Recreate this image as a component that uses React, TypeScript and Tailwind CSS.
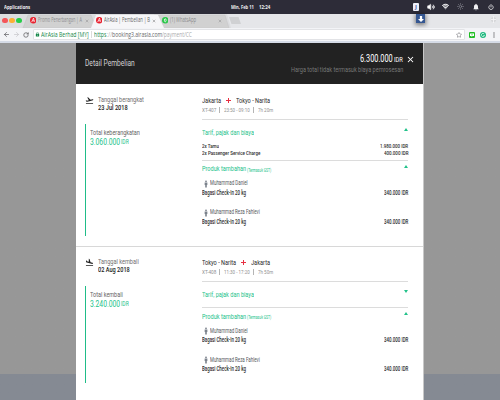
import { useLayoutEffect, useRef, useState } from "react";
import type { ReactNode } from "react";
import { Volume2, Wifi, Sun, Power, ArrowLeft, ArrowRight, RotateCw, Star, X } from "lucide-react";
import { MdFlightTakeoff, MdFlightLand, MdLock, MdNotifications, MdMoreVert } from "react-icons/md";

/* Single line of text condensed or widened to fill the width of its box. */
function Fit({ className, children }: { className: string; children: ReactNode }) {
  const box = useRef<HTMLDivElement>(null);
  const text = useRef<HTMLSpanElement>(null);
  const [scale, setScale] = useState(1);
  useLayoutEffect(() => {
    if (box.current && text.current) {
      setScale(box.current.getBoundingClientRect().width / text.current.offsetWidth);
    }
  }, [children]);
  return (
    <div ref={box} className={`shrink-0 whitespace-nowrap leading-none ${className}`}>
      <span ref={text} className="inline-block origin-left" style={{ transform: `scaleX(${scale})` }}>
        {children}
      </span>
    </div>
  );
}

function AirAsiaIcon() {
  return (
    <svg viewBox="0 0 12 12" className="size-[6.5px] shrink-0">
      <circle cx="6" cy="6" r="6" fill="#e8202e" />
      <path d="M3 9.5 6.5 2l1.6 7M4.4 7h4" fill="none" stroke="#fff" strokeWidth="1.3" />
    </svg>
  );
}

function WhatsAppIcon() {
  return (
    <svg viewBox="0 0 12 12" className="size-[6.5px] shrink-0">
      <circle cx="6" cy="6" r="6" fill="#2bc64a" />
      <ellipse cx="6" cy="6" rx="1.6" ry="2.8" fill="none" stroke="#fff" strokeWidth="1.5" />
    </svg>
  );
}

function TopBar() {
  return (
    <div className="flex h-[14px] items-center bg-[#2d2c38] pb-px text-[6px] font-bold text-[#f0f0f2]">
      <Fit className="ml-1 w-[26px]">Applications</Fit>
      <Fit className="ml-[201px] w-[23px]">Min, Feb 11</Fit>
      <Fit className="ml-[5px] w-[11px]">12:24</Fit>
      <div className="ml-[143px] flex h-[8px] w-[6px] items-center justify-center rounded-[1px] bg-[#eef1fa] text-[6px] leading-none text-[#4c57a0]">J</div>
      <Volume2 className="ml-[8px] size-[8px] shrink-0 fill-white" strokeWidth={2} />
      <Wifi className="ml-[7px] size-[7px] shrink-0" strokeWidth={3.5} />
      <Sun className="ml-[8px] size-[7px] shrink-0 text-[#85858e]" strokeWidth={2.5} />
      <MdNotifications className="ml-[8px] size-[8px] shrink-0" />
      <Power className="ml-[8px] size-[6px] shrink-0" strokeWidth={3} />
    </div>
  );
}

function TabStrip() {
  return (
    <div className="relative flex h-[14px] items-center bg-[#e5e6e9] text-[6.500px] text-[#8c8c8e]">
      <svg viewBox="0 0 245 14" className="absolute inset-0 h-[14px] w-[245px]">
        <path d="M0 0H227L231 14H0z" fill="#dcdddf" />
        <path d="M23 14 28 1H91L96 14z" fill="#d1d1d1" stroke="#c2c2c4" strokeWidth=".5" />
        <path d="M157 14 154 1H225L229 14z" fill="#d1d1d1" stroke="#c5c5c7" strokeWidth=".5" />
        <path d="M91 14 96 1H158L164 14z" fill="#f6f6f8" />
        <path d="M229 3H238.500L241 10H231.500z" fill="#d0d1d3" />
      </svg>
      <div className="relative flex h-full items-center pb-[1px]">
        <div className="ml-[2px] size-[5.500px] rounded-full bg-[#f4565a]" />
        <div className="ml-[1.500px] size-[5.500px] rounded-full bg-[#fbb035]" />
        <div className="ml-[1.500px] size-[5.500px] rounded-full bg-[#27cd49]" />
        <div className="ml-[8px] flex"><AirAsiaIcon /></div>
        <Fit className="ml-[1.500px] w-[44px]">Promo Penerbangan | A</Fit>
        <X className="ml-[3px] size-[4px]" strokeWidth={3} />
        <div className="ml-[7px] flex"><AirAsiaIcon /></div>
        <Fit className="ml-[1.500px] w-[46px] text-[#666]">AirAsia | Pembelian | B</Fit>
        <X className="ml-[2px] size-[4px] text-[#777]" strokeWidth={3} />
        <div className="ml-[6px] flex"><WhatsAppIcon /></div>
        <Fit className="ml-[2px] w-[26px]">(1) WhatsApp</Fit>
        <X className="ml-[22px] size-[4px]" strokeWidth={3} />
      </div>
      <div className="absolute left-[416px] top-0 flex h-[9px] w-[9px] items-center justify-center bg-[#345691] shadow-[0_1px_4px_1px_rgba(0,0,0,0.45)]">
        <svg viewBox="0 0 8 8" className="size-[6px]"><path d="M2.500 0h3v4H8L4 8 0 4h2.500z" fill="#fff" /></svg>
      </div>
      <svg viewBox="0 0 8 8" className="absolute left-[490px] top-[2px] size-[7px]">
        <circle cx="4" cy="4" r="3" fill="#d6d7d9" /><path d="M4 0v8M1 4h6" stroke="#f5f5f7" />
      </svg>
    </div>
  );
}

function Toolbar() {
  return (
    <div className="flex h-[15px] items-center border-b-2 border-[#d5dbe6] bg-[#f3f4f7] text-[#606164]">
      <ArrowLeft className="ml-[3px] size-[7px] shrink-0" strokeWidth={2.5} />
      <ArrowRight className="ml-[3px] size-[7px] shrink-0 text-[#c6c7ca]" strokeWidth={2.5} />
      <RotateCw className="ml-[3px] size-[6px] shrink-0" strokeWidth={3} />
      <div className="ml-[4px] flex h-[11px] w-[432px] shrink-0 items-center rounded-[1px] border border-[#e2e3e6] bg-white text-[7px] text-[#66676a]">
        <MdLock className="ml-px size-[5px] shrink-0 text-[#16874a]" />
        <Fit className="ml-[1px] w-[48px] text-[#16874a]">AirAsia Berhad [MY]</Fit>
        <div className="ml-[2px] h-[7px] w-px bg-[#dcdcdc]" />
        <Fit className="ml-[2px] w-[12.500px] text-[#16874a]">https</Fit>
        <Fit className="w-[55px]"><span className="text-[#aaa]">://</span>booking3.airasia.com</Fit>
        <Fit className="w-[30px] text-[#aaabad]">/payment/CC</Fit>
        <Star className="ml-auto mr-[2px] size-[6px] shrink-0" strokeWidth={2} />
      </div>
      <svg viewBox="0 0 12 12" className="ml-[4px] size-[6px] shrink-0">
        <rect width="12" height="12" rx="2" fill="#20bd24" />
        <path d="M2 3h8v5H7L5 10V8H2z" fill="#fff" /><path d="M4 5.500h4" stroke="#20bd24" />
      </svg>
      <svg viewBox="0 0 12 12" className="ml-[5px] size-[6px] shrink-0">
        <circle cx="6" cy="6" r="6" fill="#1cb87e" />
        <path d="M8.500 4A3.200 3.200 0 1 0 9 7H6.500" fill="none" stroke="#fff" strokeWidth="1.300" />
      </svg>
      <MdMoreVert className="ml-[4px] size-[8px] shrink-0" />
    </div>
  );
}

function PersonIcon() {
  return (
    <svg viewBox="0 0 5 9" className="ml-[2px] mr-[2px] h-[8px] w-[4px] shrink-0">
      <circle cx="2.500" cy="1.200" r="1" fill="#626a76" />
      <path d="M.8 2.600h3.400v3H3.500V9h-2V5.600H.8z" fill="#7b828c" />
    </svg>
  );
}

function Triangle({ down, className }: { down?: boolean; className: string }) {
  return (
    <svg viewBox="0 0 8 6" className={`ml-auto h-[3px] w-[4px] shrink-0 self-start ${className}`}>
      <path d={down ? "M0 0h8L4 6z" : "M0 6h8L4 0z"} fill="#22c28a" />
    </svg>
  );
}

function Plus() {
  return (
    <svg viewBox="0 0 10 10" className="size-[5px] shrink-0">
      <path d="M5 0v10M0 5h10" stroke="#e72f42" strokeWidth="2" />
    </svg>
  );
}

function Passenger({ name, width }: { name: string; width: string }) {
  return (
    <div className="h-[29px] text-[6.500px]">
      <div className="flex h-[10px] items-center text-[#54575d]">
        <PersonIcon />
        <Fit className={width}>{name}</Fit>
      </div>
      <div className="flex h-[9px] items-center justify-between font-medium text-[#2c2c2c]">
        <Fit className="w-[44px]">Bagasi Check-In 20 kg</Fit>
        <Fit className="w-[24.500px]">340.000 IDR</Fit>
      </div>
    </div>
  );
}

function FlightMeta({ code, time, duration }: { code: string; time: string; duration: string }) {
  return (
    <div className="flex h-[9px] items-center text-[6px] text-[#909090]">
      <Fit className="w-[14px]">{code}</Fit>
      <div className="ml-[3px] h-[6px] w-px bg-[#b5b5b5]" />
      <Fit className="ml-[4px] w-[26px]">{time}</Fit>
      <div className="ml-[3px] h-[6px] w-px bg-[#b5b5b5]" />
      <Fit className="ml-[4px] w-[15px]">{duration}</Fit>
    </div>
  );
}

function Divider({ className = "" }: { className?: string }) {
  return <div className={`h-px bg-[#dcdcdc] ${className}`} />;
}

function Total({ className, label, labelWidth, amount }: { className: string; label: string; labelWidth: string; amount: string }) {
  return (
    <div className={`mt-[12px] flex ${className}`}>
      <div className="w-px bg-[#1fbd88]" />
      <div className="pl-[4px] pt-[4px]">
        <div className="flex h-[9px] items-center text-[7.500px] text-[#636363]"><Fit className={labelWidth}>{label}</Fit></div>
        <div className="flex h-[10px] items-center text-[#22c28a]">
          <Fit className="w-[30px] text-[9px]">{amount}</Fit>
          <Fit className="ml-[1px] w-[8px] text-[7.500px]">IDR</Fit>
        </div>
      </div>
    </div>
  );
}

function AddOns({ className, triangle }: { className: string; triangle: string }) {
  return (
    <>
      <div className={`flex items-center text-[#22c28a] ${className}`}>
        <Fit className="w-[44px] text-[8px]">Produk tambahan</Fit>
        <Fit className="ml-[1px] w-[24px] pt-[2px] text-[5px]">(Termasuk GST)</Fit>
        <Triangle className={triangle} />
      </div>
      <Passenger name="Muhammad Daniel" width="w-[38px]" />
      <Passenger name="Muhammad Reza Fahlevi" width="w-[50px]" />
    </>
  );
}

function Departure() {
  return (
    <section className="flex h-[162px] pl-[9px] pt-[12px]">
      <div className="w-[117px] shrink-0">
        <div className="flex">
          <MdFlightTakeoff className="h-[9px] w-[9px] shrink-0 text-[#202020]" />
          <div className="ml-[4px]">
            <div className="flex h-[8px] items-center text-[7.500px] text-[#6f6f6f]"><Fit className="w-[46px]">Tanggal berangkat</Fit></div>
            <div className="flex h-[8px] items-center text-[7.500px] font-medium text-[#222]"><Fit className="w-[30px]">23 Jul 2018</Fit></div>
          </div>
        </div>
        <Total className="h-[112px]" label="Total keberangkatan" labelWidth="w-[50px]" amount="3.060.000" />
      </div>
      <div className="w-[206px]">
        <div className="flex h-[9px] items-center text-[8px] text-[#282828]">
          <Fit className="w-[19px]">Jakarta</Fit>
          <div className="ml-[5px] mr-[5px] flex"><Plus /></div>
          <Fit className="w-[34px]">Tokyo - Narita</Fit>
        </div>
        <FlightMeta code="XT-407" time="23:50 - 09:10" duration="7h 20m" />
        <Divider className="mt-[5px]" />
        <div className="flex h-[22px] items-center pt-[4px] text-[8px] text-[#22c28a]">
          <Fit className="w-[52px]">Tarif, pajak dan biaya</Fit>
          <Triangle className="mt-[4px]" />
        </div>
        <div className="pb-[3px] text-[6px] font-medium text-[#2c2c2c]">
          <div className="flex h-[7.500px] items-center justify-between">
            <Fit className="w-[17px]">2x Tamu</Fit>
            <Fit className="w-[28px]">1.980.000 IDR</Fit>
          </div>
          <div className="flex h-[7.500px] items-center justify-between">
            <Fit className="w-[58px]">2x Passenger Service Charge</Fit>
            <Fit className="w-[24.500px]">400.000 IDR</Fit>
          </div>
        </div>
        <Divider />
        <AddOns className="h-[17.500px] pb-[1.500px]" triangle="mt-[4px]" />
      </div>
    </section>
  );
}

function Return() {
  return (
    <section className="flex border-t border-[#d8d8d8] pt-[11px]">
      <div className="w-[126px] shrink-0 pl-[9px]">
        <div className="flex">
          <MdFlightLand className="h-[9px] w-[9px] shrink-0 text-[#202020]" />
          <div className="ml-[4px]">
            <div className="flex h-[8px] items-center text-[7.500px] text-[#6f6f6f]"><Fit className="w-[41px]">Tanggal kembali</Fit></div>
            <div className="flex h-[8px] items-center text-[7.500px] font-medium text-[#222]"><Fit className="w-[32px]">02 Aug 2018</Fit></div>
          </div>
        </div>
        <Total className="h-[97px]" label="Total kembali" labelWidth="w-[33px]" amount="3.240.000" />
      </div>
      <div className="w-[206px]">
        <div className="flex h-[9px] items-center text-[8px] text-[#282828]">
          <Fit className="w-[34px]">Tokyo - Narita</Fit>
          <div className="ml-[5px] mr-[5px] flex"><Plus /></div>
          <Fit className="w-[19px]">Jakarta</Fit>
        </div>
        <FlightMeta code="XT-408" time="11:30 - 17:20" duration="7h 50m" />
        <Divider className="mt-[5px]" />
        <div className="flex h-[25px] items-center pt-[1px] text-[8px] text-[#22c28a]">
          <Fit className="w-[52px]">Tarif, pajak dan biaya</Fit>
          <Triangle down className="mt-[7px]" />
        </div>
        <Divider />
        <AddOns className="h-[18px] pb-[1px]" triangle="mt-[4px]" />
      </div>
    </section>
  );
}

export default function App() {
  return (
    <div className="flex h-[400px] w-[500px] flex-col overflow-hidden bg-[#979797] font-['Roboto','Noto_Sans',sans-serif]">
      <header className="shrink-0 font-['Open_Sans','Noto_Sans',sans-serif]">
        <TopBar />
        <TabStrip />
        <Toolbar />
      </header>
      <div className="flex min-h-0 flex-1 justify-center bg-linear-to-b from-[#979797] from-[331px] to-[#858a93] to-[331px]">
        <main className="w-[348px] overflow-hidden border-r border-[#c8c8c8] bg-white">
          <div className="flex h-[41px] bg-[#222] pl-[9px]">
            <div className="flex h-full items-center text-[8.500px] text-[#d2d2d2]"><Fit className="w-[50px]">Detail Pembelian</Fit></div>
            <div className="ml-[156px] w-[112px] pt-[10px]">
              <div className="flex h-[12px] items-center justify-end text-white">
                <Fit className="w-[33px] text-[10px]">6.300.000</Fit>
                <Fit className="ml-[1.500px] w-[9px] pt-[2px] text-[7px]">IDR</Fit>
              </div>
              <div className="flex h-[9px] items-center text-[7.500px] text-[#777]"><Fit className="w-[112px]">Harga total tidak termasuk biaya pemrosesan</Fit></div>
            </div>
            <X className="ml-[3px] mt-[11.500px] size-[9px] text-white" strokeWidth={2.8} />
          </div>
          <Departure />
          <Return />
        </main>
      </div>
    </div>
  );
}
